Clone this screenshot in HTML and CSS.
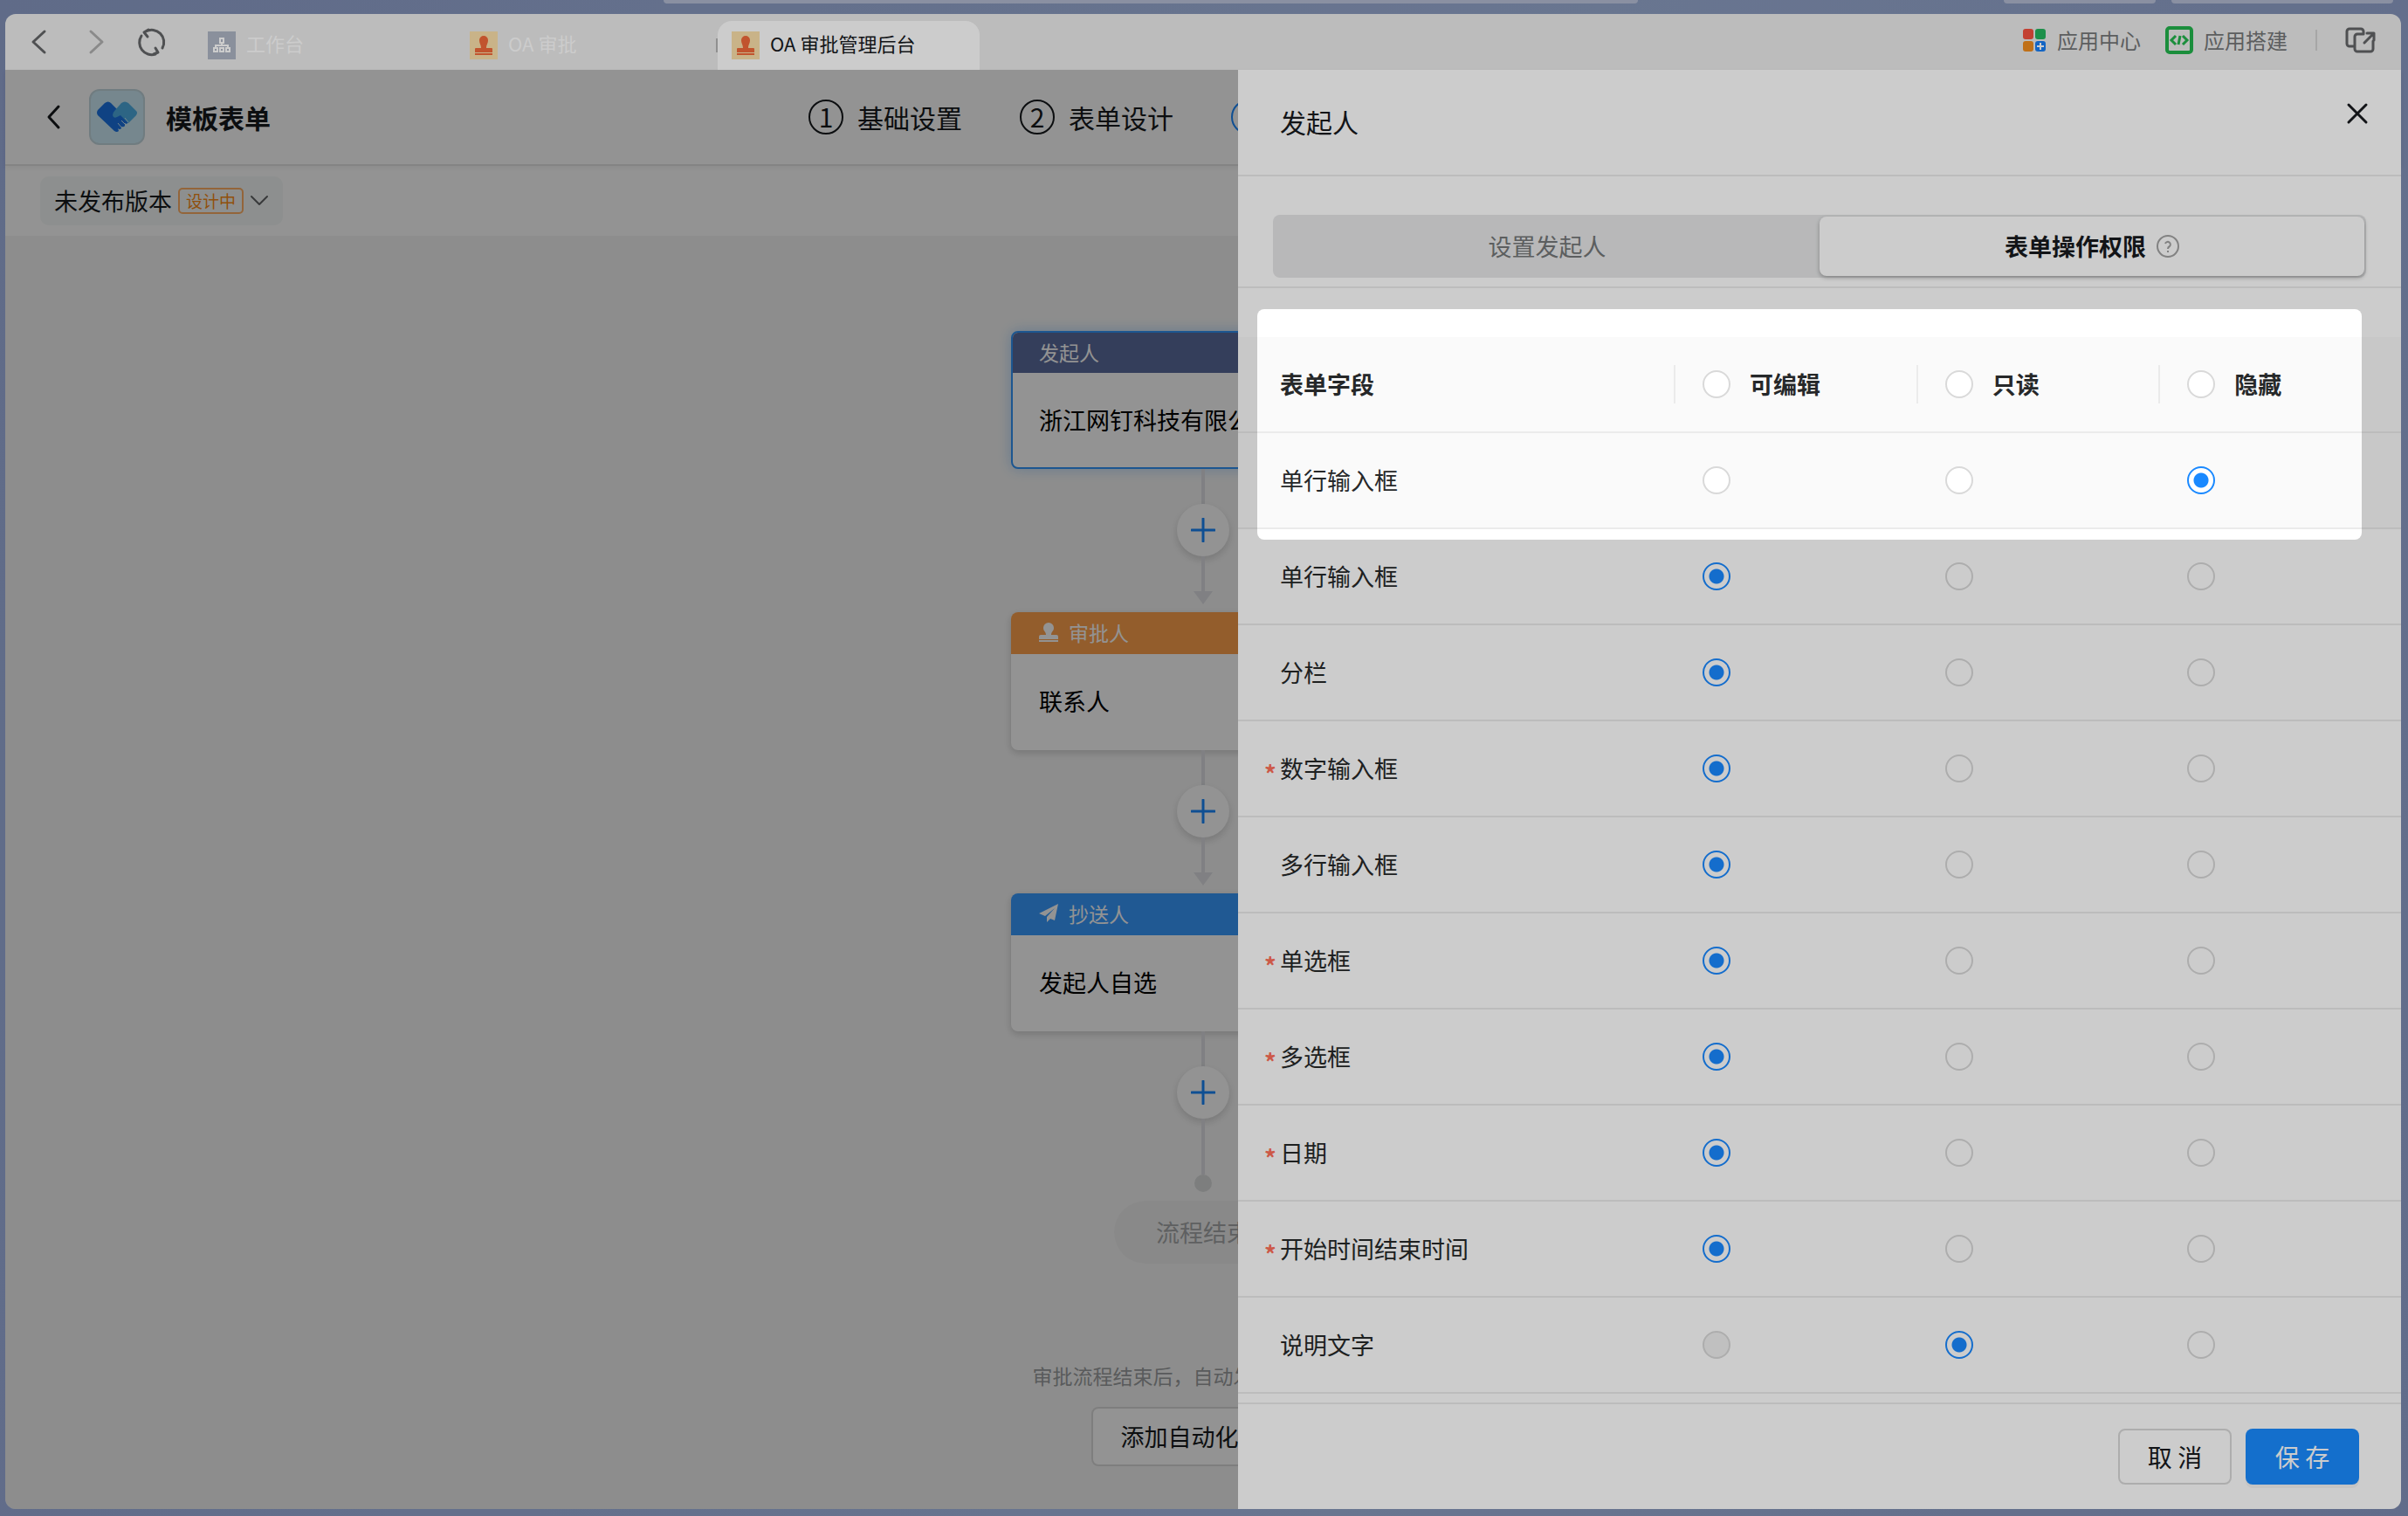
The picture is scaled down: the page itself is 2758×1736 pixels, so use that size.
FILE: index.html
```html
<!DOCTYPE html>
<html lang="zh-CN">
<head>
<meta charset="UTF-8">
<meta name="viewport" content="width=device-width, initial-scale=1.0">
<title>OA 审批管理后台</title>
<link rel="stylesheet" href="styles.css">
</head>
<body>

<div class="desktop-strip">
  <div class="strip strip-search"></div>
  <div class="strip strip-small"></div>
  <div class="strip strip-large"></div>
</div>

<div class="window">

  <!-- Barra de pestañas -->
  <header class="tab-bar">
    <nav class="nav-buttons">
      <button class="icon-button" aria-label="后退">
        <svg width="32" height="36" viewBox="0 0 32 36"><path d="M21 6 8 18l13 12" class="stroke-dark"/></svg>
      </button>
      <button class="icon-button" aria-label="前进">
        <svg width="32" height="36" viewBox="0 0 32 36"><path d="M10 6l13 12L10 30" class="stroke-light"/></svg>
      </button>
      <button class="icon-button" aria-label="刷新">
        <svg width="32" height="36" viewBox="0 0 32 36"><path d="M4 11a14 14 0 0 0 16 21M28 25A14 14 0 0 0 9 6M20 25l3 5-5 2M11 12 7 7l5-3" class="stroke-dark"/></svg>
      </button>
    </nav>
    <div class="tabs">
      <a class="tab" href="#">
        <svg class="tab-icon" viewBox="0 0 32 32">
          <rect width="32" height="32" fill="#adb5c3"/>
          <g fill="none" stroke="#fff" stroke-width="2"><rect x="14" y="8" width="4" height="5"/><path d="M16 13v3M9 19v-3h14v3"/><rect x="7" y="19" width="4" height="4"/><rect x="14" y="19" width="4" height="4"/><rect x="21" y="19" width="4" height="4"/></g>
        </svg>
        <span class="tab-text">工作台</span>
      </a>
      <a class="tab" href="#">
        <svg class="tab-icon" viewBox="0 0 32 32">
          <rect width="32" height="32" fill="#fce0aa"/>
          <path d="M16 5a5 5 0 0 1 5 5c0 4-2 5-2 9h6a1 1 0 0 1 1 1v4H6v-4a1 1 0 0 1 1-1h6c0-4-2-5-2-9a5 5 0 0 1 5-5zM6 25h20v2H6z" fill="#f2693a"/>
        </svg>
        <span class="tab-text">OA 审批</span>
      </a>
      <a class="tab tab-active" href="#">
        <svg class="tab-icon" viewBox="0 0 32 32">
          <rect width="32" height="32" fill="#fce0aa"/>
          <path d="M16 5a5 5 0 0 1 5 5c0 4-2 5-2 9h6a1 1 0 0 1 1 1v4H6v-4a1 1 0 0 1 1-1h6c0-4-2-5-2-9a5 5 0 0 1 5-5zM6 25h20v2H6z" fill="#f2693a"/>
        </svg>
        <span class="tab-text">OA 审批管理后台</span>
      </a>
    </div>
    <div class="bar-links">
      <a class="bar-link" href="#">
        <svg width="28" height="28" viewBox="0 0 28 28">
          <rect x="1" y="1" width="12" height="12" rx="3" fill="#f4503f"/>
          <rect x="15" y="1" width="12" height="12" rx="3" fill="#25b45e"/>
          <rect x="1" y="15" width="12" height="12" rx="3" fill="#f08c1e"/>
          <rect x="15" y="15" width="12" height="12" rx="3" fill="#1a7ff5"/>
          <path d="M21 17v8M17 21h8" stroke="#fff" stroke-width="2"/>
        </svg>
        应用中心
      </a>
      <a class="bar-link" href="#">
        <svg width="32" height="32" viewBox="0 0 32 32">
          <rect x="2" y="2" width="28" height="28" rx="3" fill="none" stroke="#22b24c" stroke-width="4"/>
          <path d="M12 11l-5 5 5 5M20 11l5 5-5 5M17 11l-2 10" fill="none" stroke="#22b24c" stroke-width="3"/>
        </svg>
        应用搭建
      </a>
      <span class="bar-divider"></span>
      <button class="icon-button" aria-label="新窗口打开">
        <svg width="36" height="32" viewBox="0 0 36 32"><path d="M11 23H5a3 3 0 0 1-3-3V6a3 3 0 0 1 3-3h13a3 3 0 0 1 3 3v3M20 9h-6a3 3 0 0 0-3 3v14a3 3 0 0 0 3 3h15a3 3 0 0 0 3-3v-9M22 19 33 8M25 8h8v8" class="stroke-dark"/></svg>
      </button>
    </div>
  </header>

  <div class="workspace">

    <!-- Cabecera de la plantilla -->
    <div class="page-header">
      <div class="page-title">
        <button class="icon-button" aria-label="返回">
          <svg width="20" height="32" viewBox="0 0 20 32"><path d="M16 4 5 16l11 12" class="stroke-black"/></svg>
        </button>
        <svg class="logo" viewBox="0 0 64 64">
          <rect x="1" y="1" width="62" height="62" rx="11" fill="#cdebf7" stroke="#c4d8df" stroke-width="2"/>
          <path d="M18 16q4-3 7 0l7 7 13 15-2 2-2-1 0 3q-1 2-4 1l0 2q-2 2-4 0l1 3q-2 2-5 0L10 30q-2-3 0-6z" fill="#1b74e4"/>
          <path d="M37 16q4-3 8 0l9 9q2 2 0 5l-9 9-9-9-4 2q-4 2-5-2 0-3 3-6z" fill="#4fb0e6"/>
          <path d="M33 39l5 6M37 36l5 5M41 33l4 5" stroke="#cdebf7" stroke-width="1"/>
        </svg>
        <h1>模板表单</h1>
      </div>
      <ol class="steps">
        <li class="step"><span class="step-number">1</span>基础设置</li>
        <li class="step"><span class="step-number">2</span>表单设计</li>
        <li class="step step-active" aria-label="流程设计"><span class="step-number"></span></li>
      </ol>
    </div>

    <div class="version-bar">
      <button class="version-button">
        未发布版本
        <span class="version-tag">设计中</span>
        <svg width="22" height="22" viewBox="0 0 22 22"><path d="M2 6l9 9 9-9" class="stroke-dark stroke-thin"/></svg>
      </button>
    </div>

    <!-- Flujo de aprobación -->
    <div class="canvas">
      <div class="card card-selected">
        <div class="card-head head-start">发起人</div>
        <div class="card-body">浙江网钉科技有限公司</div>
      </div>
      <div class="connector">
        <span class="line"></span>
        <button class="add-button" aria-label="添加节点"><svg width="28" height="28" viewBox="0 0 28 28"><path d="M14 1v26M1 14h26" class="stroke-blue"/></svg></button>
        <span class="line"></span>
        <span class="arrow"></span>
      </div>
      <div class="card">
        <div class="card-head head-approve">
          <svg width="22" height="22" viewBox="0 0 22 22"><path d="M11 0a6 6 0 0 1 6 6c0 4-3 4-3 8h6a2 2 0 0 1 2 2v3H0v-3a2 2 0 0 1 2-2h6c0-4-3-4-3-8a6 6 0 0 1 6-6zM0 20h22v2H0z" fill="#fff"/></svg>
          审批人
        </div>
        <div class="card-body">联系人</div>
      </div>
      <div class="connector">
        <span class="line"></span>
        <button class="add-button" aria-label="添加节点"><svg width="28" height="28" viewBox="0 0 28 28"><path d="M14 1v26M1 14h26" class="stroke-blue"/></svg></button>
        <span class="line"></span>
        <span class="arrow"></span>
      </div>
      <div class="card">
        <div class="card-head head-copy">
          <svg width="22" height="22" viewBox="0 0 22 22"><path d="M22 0 0 11l7 3L18 5 9 15v6l4-4 5 2z" fill="#fff"/></svg>
          抄送人
        </div>
        <div class="card-body">发起人自选</div>
      </div>
      <div class="connector">
        <span class="line"></span>
        <button class="add-button" aria-label="添加节点"><svg width="28" height="28" viewBox="0 0 28 28"><path d="M14 1v26M1 14h26" class="stroke-blue"/></svg></button>
        <span class="line line-long"></span>
        <span class="end-dot"></span>
      </div>
      <div class="end-label">流程结束</div>
      <p class="hint">审批流程结束后，自动发送消息等操作</p>
      <button class="automation-button">添加自动化流程</button>
    </div>

    <div class="page-mask"></div>

    <!-- Panel lateral -->
    <aside class="drawer">
      <div class="drawer-header">
        <h2>发起人</h2>
        <button class="icon-button close-button" aria-label="关闭">
          <svg width="26" height="26" viewBox="0 0 26 26"><path d="M3 3l20 20M23 3 3 23" class="stroke-black"/></svg>
        </button>
      </div>
      <div class="drawer-tabs">
        <div class="segmented">
          <button class="segment">设置发起人</button>
          <button class="segment segment-active">
            表单操作权限
            <svg width="26" height="26" viewBox="0 0 26 26"><circle cx="13" cy="13" r="12" fill="none" stroke="#a3a3a3" stroke-width="2"/><path d="M10 10a3 3 0 1 1 5 3q-2 1-2 3M13 18v2" fill="none" stroke="#a3a3a3" stroke-width="2"/></svg>
          </button>
        </div>
      </div>

      <div class="table-area">
        <table class="permissions">
          <thead>
            <tr>
              <th class="field-column">表单字段</th>
              <th><label class="column-label"><input type="radio" name="all">可编辑</label></th>
              <th><label class="column-label"><input type="radio" name="all">只读</label></th>
              <th><label class="column-label"><input type="radio" name="all">隐藏</label></th>
            </tr>
          </thead>
          <tbody>
            <tr class="row-current">
              <td>单行输入框</td>
              <td><input type="radio" name="f1" aria-label="可编辑"></td>
              <td><input type="radio" name="f1" aria-label="只读"></td>
              <td><input type="radio" name="f1" aria-label="隐藏" checked></td>
            </tr>
            <tr>
              <td>单行输入框</td>
              <td><input type="radio" name="f2" aria-label="可编辑" checked></td>
              <td><input type="radio" name="f2" aria-label="只读"></td>
              <td><input type="radio" name="f2" aria-label="隐藏"></td>
            </tr>
            <tr>
              <td>分栏</td>
              <td><input type="radio" name="f3" aria-label="可编辑" checked></td>
              <td><input type="radio" name="f3" aria-label="只读"></td>
              <td><input type="radio" name="f3" aria-label="隐藏"></td>
            </tr>
            <tr>
              <td><span class="required">*</span>数字输入框</td>
              <td><input type="radio" name="f4" aria-label="可编辑" checked></td>
              <td><input type="radio" name="f4" aria-label="只读"></td>
              <td><input type="radio" name="f4" aria-label="隐藏"></td>
            </tr>
            <tr>
              <td>多行输入框</td>
              <td><input type="radio" name="f5" aria-label="可编辑" checked></td>
              <td><input type="radio" name="f5" aria-label="只读"></td>
              <td><input type="radio" name="f5" aria-label="隐藏"></td>
            </tr>
            <tr>
              <td><span class="required">*</span>单选框</td>
              <td><input type="radio" name="f6" aria-label="可编辑" checked></td>
              <td><input type="radio" name="f6" aria-label="只读"></td>
              <td><input type="radio" name="f6" aria-label="隐藏"></td>
            </tr>
            <tr>
              <td><span class="required">*</span>多选框</td>
              <td><input type="radio" name="f7" aria-label="可编辑" checked></td>
              <td><input type="radio" name="f7" aria-label="只读"></td>
              <td><input type="radio" name="f7" aria-label="隐藏"></td>
            </tr>
            <tr>
              <td><span class="required">*</span>日期</td>
              <td><input type="radio" name="f8" aria-label="可编辑" checked></td>
              <td><input type="radio" name="f8" aria-label="只读"></td>
              <td><input type="radio" name="f8" aria-label="隐藏"></td>
            </tr>
            <tr>
              <td><span class="required">*</span>开始时间结束时间</td>
              <td><input type="radio" name="f9" aria-label="可编辑" checked></td>
              <td><input type="radio" name="f9" aria-label="只读"></td>
              <td><input type="radio" name="f9" aria-label="隐藏"></td>
            </tr>
            <tr>
              <td>说明文字</td>
              <td><input type="radio" name="f10" aria-label="可编辑" disabled></td>
              <td><input type="radio" name="f10" aria-label="只读" checked></td>
              <td><input type="radio" name="f10" aria-label="隐藏"></td>
            </tr>
          </tbody>
        </table>
        <div class="spotlight"></div>
      </div>

      <div class="drawer-footer">
        <button class="button">取 消</button>
        <button class="button button-primary">保 存</button>
      </div>
    </aside>

  </div>
</div>

</body>
</html>
```

FILE: styles.css
```css
* {
  box-sizing: border-box;
}

body {
  margin: 0;
  min-height: 100vh;
  display: flex;
  flex-direction: column;
  overflow: hidden;
  font-family: "Noto Sans CJK SC", "Liberation Sans", sans-serif;
  font-size: 27px;
  line-height: 40px;
  color: #171a1d;
  background: linear-gradient(100deg, #7886ab, #8494b5 60%, #7a88ad);
}

button {
  font: inherit;
  color: inherit;
  cursor: pointer;
}

a {
  color: inherit;
  text-decoration: none;
}

svg {
  flex: none;
  display: block;
}

.icon-button {
  padding: 0;
  border: none;
  background: none;
}

/* Trazos de los iconos */
.stroke-dark,
.stroke-light,
.stroke-black,
.stroke-blue {
  fill: none;
  stroke-width: 3;
  stroke-linecap: round;
  stroke-linejoin: round;
}

.stroke-dark { stroke: #636567; }
.stroke-light { stroke: #adadad; }
.stroke-black { stroke: #171a1d; }
.stroke-blue { stroke: #1a89ff; }
.stroke-thin { stroke-width: 2; }

/* Franja superior del escritorio */
.desktop-strip {
  display: flex;
  height: 16px;
  padding: 0 17px 0 760px;
}

.strip {
  height: 4px;
  border-radius: 0 0 4px 4px;
  background-color: #adb5cb;
}

.strip-search {
  width: 1116px;
  margin-right: auto;
}

.strip-small {
  width: 174px;
  margin-right: 18px;
}

.strip-large {
  width: 254px;
}

.window {
  flex: 1;
  display: flex;
  flex-direction: column;
  margin: 0 8px 8px 6px;
}

.tab-bar {
  display: flex;
  align-items: center;
  height: 64px;
  padding-right: 28px;
  border-radius: 12px 12px 0 0;
  background-color: #ebebeb;
}

.nav-buttons {
  display: flex;
  align-items: center;
  width: 216px;
  padding-left: 24px;
  gap: 32px;
}

.tabs {
  display: flex;
  align-self: flex-end;
}

.tab {
  display: flex;
  align-items: center;
  gap: 12px;
  width: 300px;
  height: 56px;
  padding: 0 16px;
  font-size: 22px;
  color: #fff;
}

.tab-active {
  position: relative;
  border-radius: 16px 16px 0 0;
  background-color: #fff;
  color: #171a1d;
}

.tab-active::before {
  content: "";
  position: absolute;
  top: 20px;
  left: -2px;
  width: 2px;
  height: 16px;
  background-color: #b4b4b4;
}

.tab-icon {
  width: 32px;
  height: 32px;
}

.tab-text {
  padding-bottom: 6px;
}

.bar-links {
  display: flex;
  align-items: center;
  margin-left: auto;
  padding-bottom: 4px;
  gap: 28px;
  font-size: 24px;
  color: #747677;
}

.bar-link {
  display: flex;
  align-items: center;
  gap: 12px;
}

.bar-divider {
  width: 2px;
  height: 24px;
  margin: 0 4px;
  background-color: #d0d0d0;
}

.workspace {
  position: relative;
  flex: 1;
  display: flex;
  flex-direction: column;
  border-radius: 0 0 12px 12px;
  background-color: #f6f6f6;
}

.page-header {
  position: relative;
  display: grid;
  grid-template-columns: 1fr auto 1fr;
  align-items: center;
  height: 110px;
  border-bottom: 2px solid #e7e7e7;
  background-color: #fff;
  box-shadow: 0 2px 6px rgba(0, 0, 0, 0.05);
}

.page-title {
  display: flex;
  align-items: center;
  padding-left: 45px;
}

.page-title h1 {
  margin: 0;
  font-size: 30px;
  font-weight: 700;
}

.logo {
  width: 64px;
  height: 64px;
  margin: 0 24px 0 31px;
}

.steps {
  display: grid;
  grid-template-columns: repeat(4, 178px);
  gap: 64px;
  margin: 0;
  padding: 0;
  list-style: none;
  font-size: 30px;
}

.step {
  display: flex;
  align-items: center;
  gap: 16px;
}

.step-number {
  width: 40px;
  height: 40px;
  border: 2px solid #171a1d;
  border-radius: 50%;
  line-height: 34px;
  text-align: center;
}

.step-active .step-number {
  border-color: #1a89ff;
}

.version-bar {
  height: 80px;
  padding: 12px 40px;
  background-color: #fff;
}

.version-button {
  display: flex;
  align-items: center;
  gap: 7px;
  height: 56px;
  padding: 0 16px;
  border: none;
  border-radius: 10px;
  background-color: #f6f9f8;
}

.version-tag {
  padding: 0 7px;
  border: 2px solid #ffb066;
  border-radius: 5px;
  font-size: 19px;
  line-height: 26px;
  color: #fa8c16;
}

.canvas {
  flex: 1;
  display: flex;
  flex-direction: column;
  align-items: center;
  padding: 109px 0 48px;
}

.card {
  width: 440px;
  height: 158px;
  border-radius: 8px;
  overflow: hidden;
  background-color: #fff;
  box-shadow: 0 3px 10px rgba(0, 0, 0, 0.18);
  color: #000;
}

.card-selected {
  border: 2px solid #3296fa;
  box-shadow: 0 0 16px rgba(50, 150, 250, 0.35);
}

.card-head {
  display: flex;
  align-items: center;
  gap: 12px;
  height: 48px;
  padding: 0 32px 3px;
  font-size: 23px;
  color: #fff;
}

.card-selected .card-head {
  height: 46px;
  padding: 0 30px 3px;
}

.card-selected .card-body {
  padding: 0 30px;
}

.head-start { background-color: #5c6d9e; }
.head-approve { background-color: #ffa34d; }
.head-copy { background-color: #389bff; }

.card-body {
  padding: 0 32px;
  line-height: 108px;
}

.connector {
  display: flex;
  flex-direction: column;
  align-items: center;
}

.line {
  width: 4px;
  height: 40px;
  background-color: #dedfe3;
}

.line-long {
  height: 64px;
}

.add-button {
  display: flex;
  align-items: center;
  justify-content: center;
  width: 60px;
  height: 60px;
  padding: 0;
  border: none;
  border-radius: 50%;
  background-color: #fff;
  box-shadow: 0 4px 10px rgba(0, 0, 0, 0.15);
}

.arrow {
  margin-bottom: 9px;
  border: 11px solid transparent;
  border-top: 15px solid #dedfe3;
  border-bottom: none;
}

.end-dot {
  width: 20px;
  height: 20px;
  border-radius: 50%;
  background-color: #dadcdc;
}

.end-label {
  margin-top: 10px;
  padding: 0 48px;
  border-radius: 36px;
  line-height: 72px;
  background-color: #efefef;
  color: #a5a7a9;
}

.hint {
  margin: 112px 0 20px;
  font-size: 23px;
  line-height: 32px;
  color: #9c9ea0;
}

.automation-button {
  height: 68px;
  padding: 0 32px;
  border: 2px solid #dcdcdc;
  border-radius: 8px;
  background-color: #fff;
}

.page-mask {
  position: absolute;
  inset: 0;
  border-radius: 0 0 12px 12px;
  background-color: rgba(0, 0, 0, 0.28);
}

.drawer {
  position: absolute;
  top: 0;
  right: 0;
  bottom: 0;
  width: 1332px;
  display: flex;
  flex-direction: column;
  border-radius: 0 0 12px 0;
  background-color: #fff;
}

.drawer-header {
  display: flex;
  justify-content: space-between;
  height: 122px;
  padding: 37px 37px 0 48px;
  border-bottom: 2px solid #ebebeb;
}

.drawer-header h2 {
  margin: 0;
  font-size: 30px;
  font-weight: 400;
  line-height: 44px;
}

.close-button {
  height: 26px;
}

.drawer-tabs {
  padding: 44px 40px 10px;
  border-bottom: 2px solid #ebebeb;
}

.segmented {
  display: grid;
  grid-template-columns: 1fr 1fr;
  height: 72px;
  padding: 2px;
  border-radius: 8px;
  background-color: #e6e7e8;
}

.segment {
  display: flex;
  align-items: center;
  justify-content: center;
  gap: 12px;
  border: none;
  border-radius: 8px;
  background: none;
  color: #747677;
}

.segment-active {
  background-color: #fff;
  box-shadow: 0 2px 5px rgba(0, 0, 0, 0.3);
  color: #171a1d;
  font-weight: 700;
}

.table-area {
  position: relative;
  padding: 56px 0 10px;
}

.permissions {
  width: 100%;
  table-layout: fixed;
  border-collapse: separate;
  border-spacing: 0;
  color: #262829;
}

.permissions th,
.permissions td {
  height: 110px;
  padding: 0;
  border-bottom: 2px solid #ebebeb;
  text-align: left;
}

.permissions th {
  background-color: #fafafa;
  font-weight: 700;
}

.permissions td {
  padding-left: 33px;
}

.permissions th:first-child,
.permissions td:first-child {
  padding-left: 48px;
}

.field-column {
  width: 499px;
}

.row-current td {
  background-color: #fafafa;
}

.column-label {
  display: flex;
  align-items: center;
  gap: 22px;
  height: 44px;
  padding-left: 31px;
  border-left: 2px solid #ebebeb;
}

.required {
  display: inline-block;
  width: 18px;
  margin-left: -18px;
  line-height: 24px;
  vertical-align: -6px;
  font-weight: 700;
  color: #ff705a;
}

input[type="radio"] {
  appearance: none;
  display: block;
  width: 32px;
  height: 32px;
  margin: 0;
  border: 2px solid #d9d9d9;
  border-radius: 50%;
  background-color: #fff;
}

input[type="radio"]:checked {
  border-color: #1a89ff;
  background-image: radial-gradient(circle, #1a89ff 8px, transparent 9px);
}

input[type="radio"]:disabled {
  background-color: #f0f0f0;
}

/* Zona resaltada: la sombra oscurece el resto de la pantalla */
.spotlight {
  position: absolute;
  top: 24px;
  left: 22px;
  right: 45px;
  height: 264px;
  border-radius: 8px;
  box-shadow: 0 0 0 3000px rgba(0, 0, 0, 0.2);
  pointer-events: none;
  z-index: 10;
}

.drawer-footer {
  display: flex;
  justify-content: flex-end;
  gap: 16px;
  height: 122px;
  margin-top: auto;
  padding: 28px 48px;
  border-top: 2px solid #ebebeb;
}

.button {
  width: 130px;
  height: 64px;
  padding: 0;
  border: 2px solid #d9d9d9;
  border-radius: 8px;
  background-color: #fff;
  font-size: 28px;
}

.button-primary {
  border: none;
  background-color: #1a8bff;
  box-shadow: 0 4px 0 rgba(0, 0, 0, 0.04);
  color: #fff;
}
```
